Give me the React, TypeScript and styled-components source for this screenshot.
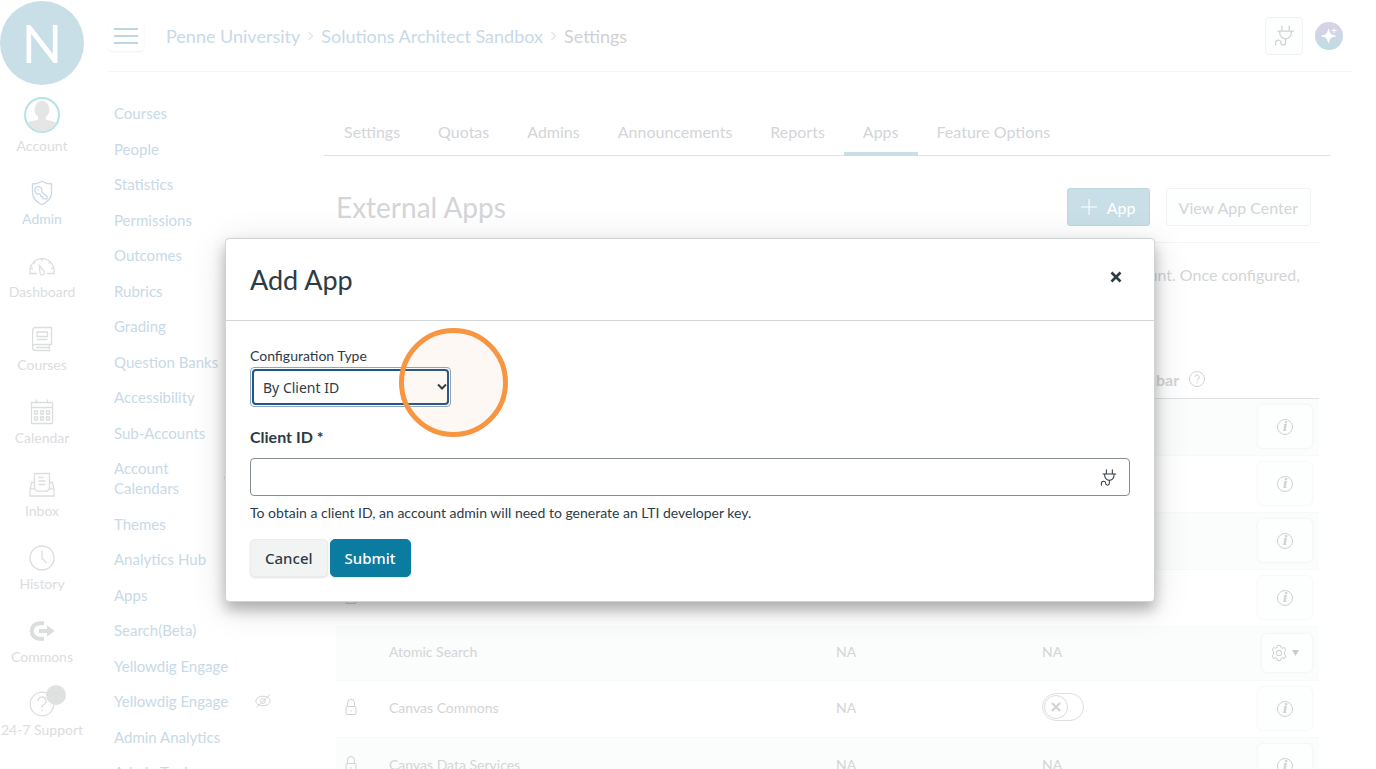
import React from "react";
import styled, { createGlobalStyle } from "styled-components";

const color = {
  ink: "#2d3b45",
  faint: "#d3d5d7",
  faintNav: "#dcdddd",
  faintLink: "#c8d9e8",
  brand: "#c9dfe7",
  rule: "#dfe2e4",
  hair: "#f4f5f6",
};

const GlobalStyle = createGlobalStyle`
  *, *::before, *::after { box-sizing: border-box; }
  body { margin: 0; background: #fff; font-family: Lato, sans-serif; font-size: 15px; color: ${color.ink}; }
  ul, ol { list-style: none; margin: 0; padding: 0; }
  button, input, select { font: inherit; color: inherit; }
  a { color: inherit; text-decoration: none; }
`;

const Page = styled.div`
  position: relative;
  display: flex;
  height: 100vh;
  overflow: hidden;
`;

/* ---------- global navigation ---------- */
const GlobalNav = styled.nav`
  flex: 0 0 84px;
`;
const Logo = styled.a`
  display: block;
  height: 85px;
  padding-top: 1px;
`;
const LogoMark = styled.span`
  display: grid;
  place-items: center;
  height: 84px;
  border-radius: 50%;
  background: ${color.brand};
  color: #fff;
  font-size: 53px;
  line-height: 84px;
`;
const NavItem = styled.a<{ $active?: boolean }>`
  display: flex;
  flex-direction: column;
  align-items: center;
  justify-content: flex-end;
  gap: 4px;
  height: 73px;
  padding-bottom: 3px;
  font-size: 14px;
  line-height: 18px;
  white-space: nowrap;
  color: ${(p) => (p.$active ? color.faintLink : color.faintNav)};
  svg { display: block; }
`;
const Avatar = styled.span`
  width: 36px;
  height: 36px;
  border: 2px solid #b5e3e6;
  border-radius: 50%;
  overflow: hidden;
`;
const BadgeHolder = styled.span`
  position: relative;
`;
const Badge = styled.span`
  position: absolute;
  top: -6px;
  right: -11px;
  width: 20px;
  height: 20px;
  border-radius: 50%;
  background: #dfe0e0;
`;

/* ---------- page header ---------- */
const Main = styled.div`
  flex: 1;
  min-width: 0;
  padding: 0 24px;
`;
const TopBar = styled.header`
  display: flex;
  align-items: center;
  height: 72px;
  padding-right: 9px;
  border-bottom: 1px solid ${color.hair};
`;
const MenuButton = styled.button`
  display: grid;
  place-items: center;
  width: 36px;
  height: 30px;
  padding: 0;
  border: 0;
  border-radius: 4px;
  background: #fff;
  box-shadow: 0 1px 2px #efefef;
`;
const Crumbs = styled.ol`
  display: flex;
  flex: 1;
  align-items: center;
  gap: 7px;
  margin-left: 22px;
  font-size: 18px;
  line-height: 24px;
  color: #cfd1d3;
  a { color: ${color.faintLink}; }
  li { display: flex; align-items: center; gap: 7px; }
`;
const PlugButton = styled.button`
  display: grid;
  place-items: center;
  width: 38px;
  height: 38px;
  margin-right: 12px;
  padding: 0;
  border: 1px solid #f1f3f3;
  border-radius: 4px;
  background: #fdfefe;
`;
const AiButton = styled.button`
  display: grid;
  place-items: center;
  width: 28px;
  height: 28px;
  padding: 0;
  border: 0;
  border-radius: 50%;
  background: linear-gradient(#dcd0e6, #bedde4);
`;

/* ---------- content ---------- */
const Columns = styled.div`
  display: flex;
`;
const SubNav = styled.nav`
  flex: 0 0 216px;
  padding: 31px 0 0 6px;
  color: ${color.faintLink};
  line-height: 20px;
`;
const SubItem = styled.li`
  display: flex;
  align-items: center;
  margin-bottom: 16px;
  &:nth-child(even) { margin-bottom: 15px; }
`;
const SubLink = styled.a<{ $narrow?: boolean }>`
  width: ${(p) => (p.$narrow ? "110px" : "141px")};
`;
const HiddenMark = styled.span`
  color: ${color.faint};
  svg { display: block; }
`;
const Content = styled.main`
  flex: 1;
  min-width: 0;
  margin-right: 22px;
  color: ${color.faint};
`;
const Tabs = styled.div`
  display: flex;
  padding: 50px 0 0 1px;
  border-bottom: 1px solid ${color.rule};
`;
const Tab = styled.button<{ $active?: boolean }>`
  margin-bottom: -1px;
  padding: 0 19px 10px;
  border: 0;
  border-bottom: 4px solid ${(p) => (p.$active ? color.brand : "transparent")};
  background: none;
  font-size: 16px;
  line-height: 20px;
  white-space: nowrap;
`;
const Panel = styled.section`
  padding: 0 11px 0 12px;
`;
const PanelHead = styled.div`
  display: flex;
  align-items: center;
  gap: 16px;
  padding: 32px 8px 16px 0;
  border-bottom: 1px solid ${color.hair};
`;
const PanelTitle = styled.h1`
  flex: 1;
  margin: 0;
  font-size: 28px;
  font-weight: 400;
  line-height: 38px;
`;
const HeadButton = styled.button<{ $primary?: boolean }>`
  display: flex;
  align-items: center;
  gap: 10px;
  height: 38px;
  padding: 0 ${(p) => (p.$primary ? 13 : 12)}px;
  border: 1px solid ${(p) => (p.$primary ? "#c0d6df" : "#f0f2f3")};
  border-radius: 3px;
  background: ${(p) => (p.$primary ? color.brand : "#fdfefe")};
  color: ${(p) => (p.$primary ? "#fff" : color.faint)};
  font-size: 16px;
`;
const Intro = styled.p`
  margin: 0;
  padding: 20px 0 49px;
  font-size: 16px;
  line-height: 24px;
`;
const AppTable = styled.table`
  width: 100%;
  table-layout: fixed;
  border-spacing: 0;
  th, td { padding: 0; text-align: left; }
  thead th { height: 39px; border-bottom: 1px solid ${color.rule}; font-size: 16px; }
  td { font-size: 14px; }
`;
const AppRow = styled.tr<{ $compact?: boolean }>`
  height: ${(p) => (p.$compact ? 54 : 57)}px;
  td { padding-bottom: 4px; border-bottom: 1px solid #f8f9f9; }
  td:first-child { padding-left: 8px; }
  td:last-child { padding-bottom: 1px; }
  &:nth-child(odd) td { background: #fbfcfc; }
  svg { display: block; }
`;
const HeadLabel = styled.span`
  display: flex;
  align-items: center;
  gap: 10px;
`;
const ActionCell = styled.div`
  display: flex;
  justify-content: flex-end;
  padding-right: 7px;
`;
const ActionButton = styled.button<{ $menu?: boolean }>`
  display: flex;
  align-items: center;
  justify-content: center;
  gap: 5px;
  width: ${(p) => (p.$menu ? 50 : 54)}px;
  height: ${(p) => (p.$menu ? 38 : 43)}px;
  padding: 0 ${(p) => (p.$menu ? 4 : 0)}px 0 0;
  border: 0;
  border-radius: 5px;
  background: #fdfefe;
  box-shadow: 0 0 3px #ebeded;
`;
const InfoGlyph = styled.span`
  width: 16px;
  height: 16px;
  border: 1px solid #cfd1d3;
  border-radius: 50%;
  font: italic bold 15px/13px "Liberation Serif", serif;
  text-align: center;
  color: #cdcfd1;
`;
const Switch = styled.label`
  display: flex;
  align-items: center;
  width: 42px;
  height: 28px;
  padding-left: 1px;
  border: 1px solid #dddfe0;
  border-radius: 14px;
  input { position: absolute; opacity: 0; }
`;
const Knob = styled.span`
  display: grid;
  place-items: center;
  width: 24px;
  height: 24px;
  border: 1px solid #dadcdd;
  border-radius: 50%;
`;

/* ---------- dialog ---------- */
const Overlay = styled.div`
  position: absolute;
  inset: 0;
  padding: 238px 221px 0 225px;
`;
const Dialog = styled.div`
  border: 1px solid #cfd3d6;
  border-radius: 4px;
  background: #fff;
  box-shadow: 0 8px 14px rgba(0, 0, 0, 0.26), 0 6px 36px rgba(0, 0, 0, 0.13);
`;
const DialogHead = styled.div`
  display: flex;
  justify-content: space-between;
  padding: 23px 30px 22px 24px;
  border-bottom: 1px solid #d3d6d9;
`;
const DialogTitle = styled.h2`
  margin: 0;
  font-size: 27px;
  font-weight: 400;
  line-height: 36px;
`;
const CloseButton = styled.button`
  display: grid;
  place-items: center;
  width: 16px;
  height: 30px;
  padding: 0;
  border: 0;
  background: none;
`;
const Form = styled.form`
  padding: 25px 24px 24px;
`;
const SmallLabel = styled.label`
  display: block;
  font-size: 14px;
  line-height: 20px;
`;
const SelectFrame = styled.div`
  position: relative;
  width: 201px;
  height: 40px;
  margin-top: 1px;
  padding: 1px;
  border: 1px solid #8ea6b8;
  border-radius: 4px;
`;
const Select = styled.select`
  appearance: none;
  display: block;
  width: 100%;
  height: 36px;
  padding: 0 9px;
  border: 2px solid #1f578c;
  border-radius: 4px;
  outline: 0;
  background: #fff;
  font: 14px "Noto Sans", sans-serif;
`;
const Chevron = styled.svg`
  position: absolute;
  top: 15px;
  right: 3px;
  pointer-events: none;
`;
const Highlight = styled.span`
  position: absolute;
  top: -40px;
  right: -58px;
  width: 109px;
  height: 109px;
  border: 5px solid #f79540;
  border-radius: 50%;
  background: rgba(240, 130, 60, 0.06);
  pointer-events: none;
`;
const FieldLabel = styled.label`
  display: block;
  margin-top: 18px;
  font-size: 16px;
  font-weight: 700;
  line-height: 24px;
`;
const InputFrame = styled.div`
  display: flex;
  align-items: center;
  height: 38px;
  margin-top: 9px;
  padding-right: 12px;
  border: 1px solid #858d94;
  border-radius: 4px;
`;
const TextInput = styled.input`
  flex: 1;
  height: 100%;
  padding: 0 12px;
  border: 0;
  outline: 0;
  background: none;
`;
const Hint = styled.p`
  margin: 7px 0 16px;
  font-size: 14px;
  line-height: 20px;
`;
const Actions = styled.div`
  display: flex;
  gap: 2px;
`;
const ActionBtn = styled.button<{ $primary?: boolean }>`
  height: 38px;
  padding: 0 14px;
  border: 1px solid ${(p) => (p.$primary ? "#0b7ba0" : "#e9ebec")};
  border-radius: 5px;
  background: ${(p) => (p.$primary ? "#0b7ba0" : "#f2f4f4")};
  box-shadow: 0 1px 2px rgba(0, 0, 0, 0.12);
  color: ${(p) => (p.$primary ? "#fff" : color.ink)};
  font: 500 15px "Noto Sans", sans-serif;
`;

const Line = ({ size = 26, children }: { size?: number; children: React.ReactNode }) => (
  <svg width={size} height={size} viewBox="0 0 26 26" fill="none" stroke="currentColor" strokeWidth="1.3">
    {children}
  </svg>
);

const Plug = ({ stroke, size }: { stroke: string; size: number }) => (
  <svg width={size} height={size} viewBox="0 0 20 20" fill="none" stroke={stroke} strokeWidth="1.2" strokeLinecap="round">
    <path d="M7.5 1v4.5M14.5 1v4.5M3.5 5.8h15M5.5 6v1.6a5.5 5.5 0 0 0 11 0V6M11 13.2v3.6a2.2 2.2 0 0 1-4.4 0c0-3.4-5-3.4-5 .4V19" />
  </svg>
);

const EyeOff = () => (
  <svg width="16" height="16" viewBox="0 0 16 16" fill="none" stroke="currentColor">
    <ellipse cx="8" cy="8" rx="7.2" ry="4.8" />
    <circle cx="8" cy="8" r="2.4" />
    <path d="M1.5 14.5 15 1.5" />
  </svg>
);

const Lock = () => (
  <svg width="14" height="18" viewBox="0 0 14 18" fill="none" stroke="#d0d2d4">
    <rect x="2" y="8.5" width="10" height="8" rx="0.8" />
    <path d="M3.5 8.5V5a3.5 3.5 0 0 1 7 0v3.5M7 12v1.6" />
  </svg>
);

const icons: Record<string, React.ReactNode> = {
  Admin: (
    <Line>
      <path d="M13 1.2c3 2 6.300 2.700 9.500 2.800v9c0 5.500-4 9-9.500 11.600C7.500 22 3.500 18.500 3.500 13V4C6.700 3.900 10 3.200 13 1.200Z" />
      <path d="M12.600 11.900a3.600 3.600 0 1 0-2.300 1.900l1.300 1 .3 1.700 1.700.4.300 1.700 3.900.5.200-2.700-5.400-4.500ZM8.700 9.200l.9.900" />
    </Line>
  ),
  Dashboard: (
    <Line>
      <path d="M8 20.500H1v-2.800a12 12 0 0 1 24 0v2.800h-7M13 5.800v2.400M5 9.200l1.400 1.300M21 9.200l-1.400 1.300M2 15.500h2M22 15.500h2M10.300 12.500l4.400 5.300a2.300 2.300 0 1 1-3.700 2.300Z" />
    </Line>
  ),
  Courses: (
    <Line>
      <path d="M6.500 1.500h16v17h-16a2.900 2.900 0 0 0 0 6h15M3.600 21.500V4.400a2.900 2.900 0 0 1 2.900-2.900M8 6h10.500v4.500H8ZM8 13.500h10.500M20.500 18.500v4.500M7 21.500h13" />
    </Line>
  ),
  Calendar: (
    <Line>
      <path d="M2.500 3.500h21v21h-21ZM2.500 8.500h21M7.500.5v4M18.500.5v4" />
      <path d="M5.500 12h3v3h-3ZM11.500 12h3v3h-3ZM17.500 12h3v3h-3ZM5.500 18h3v3h-3ZM11.500 18h3v3h-3ZM17.500 18h3v3h-3Z" />
    </Line>
  ),
  Inbox: (
    <Line>
      <path d="M5.500 16.500v-15h15v15M5.500 10.500h-3l-1.500 8v5.500h24v-5.500l-1.500-8h-3M1 16.800h5l1.500 2.400h11l1.500-2.400h5M9.500 5.500h5M9.500 9h7M9.500 12.500h7" />
    </Line>
  ),
  History: (
    <Line>
      <circle cx="13" cy="13" r="12" />
      <path d="M13 5.500v8l5 4.500" />
    </Line>
  ),
  Commons: (
    <Line>
      <path d="M15 5.200h-4.500a7.800 7.800 0 0 0 0 15.600H15" strokeWidth="4" />
      <path d="M10 13h9" strokeWidth="4" />
      <path d="M18 7.200 25.500 13 18 18.800Z" fill="currentColor" stroke="none" />
    </Line>
  ),
  "24-7 Support": (
    <BadgeHolder>
      <Line>
        <circle cx="13" cy="13" r="11.800" />
        <path d="M9 10a4 4 0 1 1 5.500 3.700c-1.100.5-1.500 1.200-1.500 2.800M13 18.500v2" />
      </Line>
      <Badge />
    </BadgeHolder>
  ),
};

const subNav = [
  "Courses", "People", "Statistics", "Permissions", "Outcomes", "Rubrics", "Grading", "Question Banks",
  "Accessibility", "Sub-Accounts", "Account Calendars", "Themes", "Analytics Hub", "Apps", "Search(Beta)",
  "Yellowdig Engage", "Yellowdig Engage", "Admin Analytics", "Admin Tools",
];

const tabs = ["Settings", "Quotas", "Admins", "Announcements", "Reports", "Apps", "Feature Options"];

type AppEntry = { name: string; locked?: boolean; menu?: boolean; toggle?: boolean };
const apps: AppEntry[] = [
  { name: "Accessibility", locked: true },
  { name: "Admin Analytics", locked: true },
  { name: "Analytics Hub", locked: true },
  { name: "Arc", locked: true },
  { name: "Atomic Search", menu: true },
  { name: "Canvas Commons", locked: true, toggle: true },
  { name: "Canvas Data Services", locked: true },
];

const Separator = () => (
  <svg width="7" height="10" viewBox="0 0 7 10" fill="none" stroke="#cfd1d3" aria-hidden="true">
    <path d="m1.500 1 4 4-4 4" />
  </svg>
);

export default function App() {
  return (
    <Page>
      <GlobalStyle />
      <GlobalNav aria-label="Global">
        <Logo href="#" aria-label="Home">
          <LogoMark>N</LogoMark>
        </Logo>
        <NavItem href="#">
          <Avatar>
            <svg width="32" height="32" viewBox="0 0 32 32" fill="#e5e5e5">
              <ellipse cx="16" cy="10.500" rx="7.500" ry="8.500" />
              <path d="M12 16h8v5c5 .5 9 1.500 12 3.500V32H0v-7.500C3 22.500 7 21.500 12 21Z" />
            </svg>
          </Avatar>
          Account
        </NavItem>
        {Object.entries(icons).map(([label, icon]) => (
          <NavItem key={label} href="#" $active={label === "Admin"}>
            {icon}
            {label}
          </NavItem>
        ))}
      </GlobalNav>

      <Main>
        <TopBar>
          <MenuButton aria-label="Toggle navigation">
            <svg width="24" height="16" viewBox="0 0 24 16" stroke="#bfd6e2" strokeWidth="2">
              <path d="M0 1h24M0 8h24M0 15h24" />
            </svg>
          </MenuButton>
          <Crumbs>
            <li><a href="#">Penne University</a><Separator /></li>
            <li><a href="#">Solutions Architect Sandbox</a><Separator /></li>
            <li>Settings</li>
          </Crumbs>
          <PlugButton aria-label="Integrations"><Plug stroke="#d0d3d6" size={21} /></PlugButton>
          <AiButton aria-label="Assistant">
            <svg width="20" height="20" viewBox="0 0 20 20" fill="#fff">
              <path d="M9.500 3c.8 4.700 2.300 6.200 7 7-4.700.8-6.200 2.300-7 7-.8-4.700-2.300-6.200-7-7 4.700-.8 6.200-2.300 7-7Z" stroke="#fff" />
              <path d="M15 2v5M12.500 4.500h5" stroke="#fff" />
            </svg>
          </AiButton>
        </TopBar>

        <Columns>
          <SubNav aria-label="Account">
            <ul>
              {subNav.map((label, i) => (
                <SubItem key={i}>
                  <SubLink href="#" $narrow={label === "Account Calendars"}>
                    {label === "Account Calendars" ? <>Account<br />Calendars</> : label}
                  </SubLink>
                  {(i === 16 || i === 10) && <HiddenMark><EyeOff /></HiddenMark>}
                </SubItem>
              ))}
            </ul>
          </SubNav>

          <Content>
            <Tabs role="tablist">
              {tabs.map((t) => (
                <Tab key={t} role="tab" aria-selected={t === "Apps"} $active={t === "Apps"}>{t}</Tab>
              ))}
            </Tabs>
            <Panel>
              <PanelHead>
                <PanelTitle>External Apps</PanelTitle>
                <HeadButton $primary>
                  <svg width="16" height="16" viewBox="0 0 16 16" stroke="#fff"><path d="M8 0v16M0 8h16" /></svg>
                  App
                </HeadButton>
                <HeadButton>View App Center</HeadButton>
              </PanelHead>
              <Intro>
                Apps are an easy way to add features to Canvas. They can be added to individual courses, or to all
                courses in an account. Once configured, you can link to them through course modules and create
                assignments for assessment tools.
              </Intro>
              <AppTable>
                <colgroup>
                  <col width="53" /><col /><col width="206" /><col width="157" /><col width="120" />
                </colgroup>
                <thead>
                  <tr>
                    <th />
                    <th>Name</th>
                    <th>Favorite</th>
                    <th colSpan={2}>
                      <HeadLabel>
                        Add to RCE toolbar
                        <svg width="16" height="16" viewBox="0 0 16 16" fill="none" stroke="#d0d2d4">
                          <circle cx="8" cy="8" r="7.500" />
                          <path d="M5.800 6.200a2.200 2.200 0 1 1 3 2c-.6.300-.8.700-.8 1.600M8 11v1.200" />
                        </svg>
                      </HeadLabel>
                    </th>
                  </tr>
                </thead>
                <tbody>
                  {apps.map((app) => (
                    <AppRow key={app.name} $compact={app.menu}>
                      <td>{app.locked && <Lock />}</td>
                      <td>{app.name}</td>
                      <td>NA</td>
                      <td>
                        {app.toggle ? (
                          <Switch>
                            <input type="checkbox" aria-label={`Add ${app.name} to toolbar`} />
                            <Knob>
                              <svg width="10" height="10" viewBox="0 0 10 10" stroke="#cfd1d3" strokeWidth="2">
                                <path d="m1 1 8 8M9 1 1 9" />
                              </svg>
                            </Knob>
                          </Switch>
                        ) : "NA"}
                      </td>
                      <td>
                        <ActionCell>
                          <ActionButton $menu={app.menu} aria-label={`${app.name} details`}>
                            {app.menu ? (
                              <>
                                <svg width="16" height="16" viewBox="0 0 16 16" fill="none" stroke="#cdcfd1" strokeLinejoin="round">
                                  <path d="M6.500.5h3l.4 2 1.500.8 2-.8 1.500 2.600L13.400 6.500v3l1.500 1.400-1.500 2.600-2-.8-1.500.8-.4 2h-3l-.4-2-1.500-.8-2 .8-1.500-2.600L2.600 9.500v-3L1.100 5.100l1.500-2.600 2 .8 1.500-.8Z" />
                                  <circle cx="8" cy="8" r="2.700" />
                                </svg>
                                <svg width="7" height="6" viewBox="0 0 7 6" fill="#c9cccd"><path d="M0 0h7L3.500 6Z" /></svg>
                              </>
                            ) : (
                              <InfoGlyph>i</InfoGlyph>
                            )}
                          </ActionButton>
                        </ActionCell>
                      </td>
                    </AppRow>
                  ))}
                </tbody>
              </AppTable>
            </Panel>
          </Content>
        </Columns>
      </Main>

      <Overlay>
        <Dialog role="dialog" aria-labelledby="dialog-title">
          <DialogHead>
            <DialogTitle id="dialog-title">Add App</DialogTitle>
            <CloseButton aria-label="Close">
              <svg width="12" height="12" viewBox="0 0 12 12" stroke={color.ink} strokeWidth="2.600">
                <path d="m1.500 1.500 9 9M10.500 1.500l-9 9" />
              </svg>
            </CloseButton>
          </DialogHead>
          <Form onSubmit={(e) => e.preventDefault()}>
            <SmallLabel htmlFor="config-type">Configuration Type</SmallLabel>
            <SelectFrame>
              <Select id="config-type" defaultValue="client">
                <option value="client">By Client ID</option>
                <option value="manual">Manual Entry</option>
              </Select>
              <Chevron width="10" height="8" viewBox="0 0 10 8" fill="none" stroke={color.ink} strokeWidth="2">
                <path d="m1 1.500 4 4 4-4" />
              </Chevron>
              <Highlight />
            </SelectFrame>
            <FieldLabel htmlFor="client-id">Client ID *</FieldLabel>
            <InputFrame>
              <TextInput id="client-id" type="text" />
              <Plug stroke={color.ink} size={17} />
            </InputFrame>
            <Hint>To obtain a client ID, an account admin will need to generate an LTI developer key.</Hint>
            <Actions>
              <ActionBtn type="button">Cancel</ActionBtn>
              <ActionBtn type="submit" $primary>Submit</ActionBtn>
            </Actions>
          </Form>
        </Dialog>
      </Overlay>
    </Page>
  );
}
